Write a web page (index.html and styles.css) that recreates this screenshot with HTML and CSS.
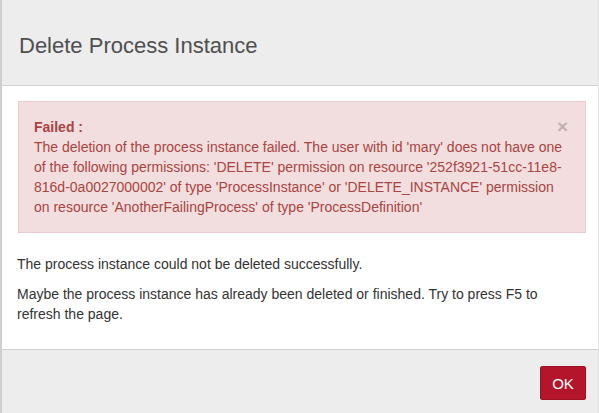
FILE: index.html
```html
<!DOCTYPE html>
<html>
<head>
<meta charset="utf-8">
<link rel="stylesheet" href="styles.css">
</head>
<body>
<div class="dialog">
  <div class="header">
    <h3 class="title">Delete Process Instance</h3>
  </div>
  <div class="body">
    <div class="alert">
      <button class="close" type="button">×</button>
      <strong>Failed :</strong><br>
      The deletion of the process instance failed. The user with id 'mary' does not have one of the following permissions: 'DELETE' permission on resource '252f3921-51cc-11e8-816d-0a0027000002' of type 'ProcessInstance' or 'DELETE_INSTANCE' permission on resource 'AnotherFailingProcess' of type 'ProcessDefinition'
    </div>
    <p>The process instance could not be deleted successfully.</p>
    <p>Maybe the process instance has already been deleted or finished. Try to press F5 to refresh the page.</p>
  </div>
  <div class="footer">
    <button class="ok" type="button">OK</button>
  </div>
</div>
</body>
</html>
```

FILE: styles.css
```css
html, body {
  margin: 0;
  padding: 0;
  background: #ededed;
}
body {
  font-family: "Liberation Sans", Arial, sans-serif;
  font-size: 14px;
  line-height: 20px;
  color: #333;
  height: 413px;
  overflow: hidden;
}
.dialog {
  width: 596px;
  height: 413px;
  border-left: 2px solid #cfcfcf;
  border-right: 1px solid #e2e2e2;
  display: flex;
  flex-direction: column;
}
.header {
  flex-shrink: 0;
  background: #ededed;
  height: 86px;
  border-bottom: 1px solid #d2d2d2;
  box-sizing: border-box;
  padding: 0 0 0 17px;
  display: flex;
  align-items: center;
}
.title {
  margin: 7px 0 0 0;
  font-weight: normal;
  font-size: 22px;
  line-height: 26px;
  color: #4f4f4f;
}
.body {
  flex-shrink: 0;
  background: #fff;
  padding: 15px 12px 15px 15px;
  border-bottom: 1px solid #cfcfcf;
}
.alert {
  position: relative;
  background: #f2dede;
  border: 1px solid #ebccd1;
  color: #a94442;
  padding: 15px 15px 15px 15px;
  margin: 0 0 21px 1px;
}
.alert strong {
  font-weight: bold;
}
.close {
  position: absolute;
  top: 15px;
  right: 17px;
  border: 0;
  background: none;
  padding: 0;
  font-family: "Liberation Sans", Arial, sans-serif;
  font-size: 19px;
  font-weight: bold;
  line-height: 20px;
  color: #000;
  opacity: 0.2;
}
.body p {
  margin: 0 8px 10px 0;
}
.footer {
  background: #ededed;
  flex: 1;
  display: flex;
  justify-content: flex-end;
  align-items: flex-start;
  padding: 16px 12px 0 0;
}
.ok {
  background: #b5152b;
  color: #fff;
  border: 1px solid #a01226;
  width: 46px;
  height: 34px;
  font-family: "Liberation Sans", Arial, sans-serif;
  font-size: 15px;
  padding: 0;
  border-radius: 2px;
}
```
